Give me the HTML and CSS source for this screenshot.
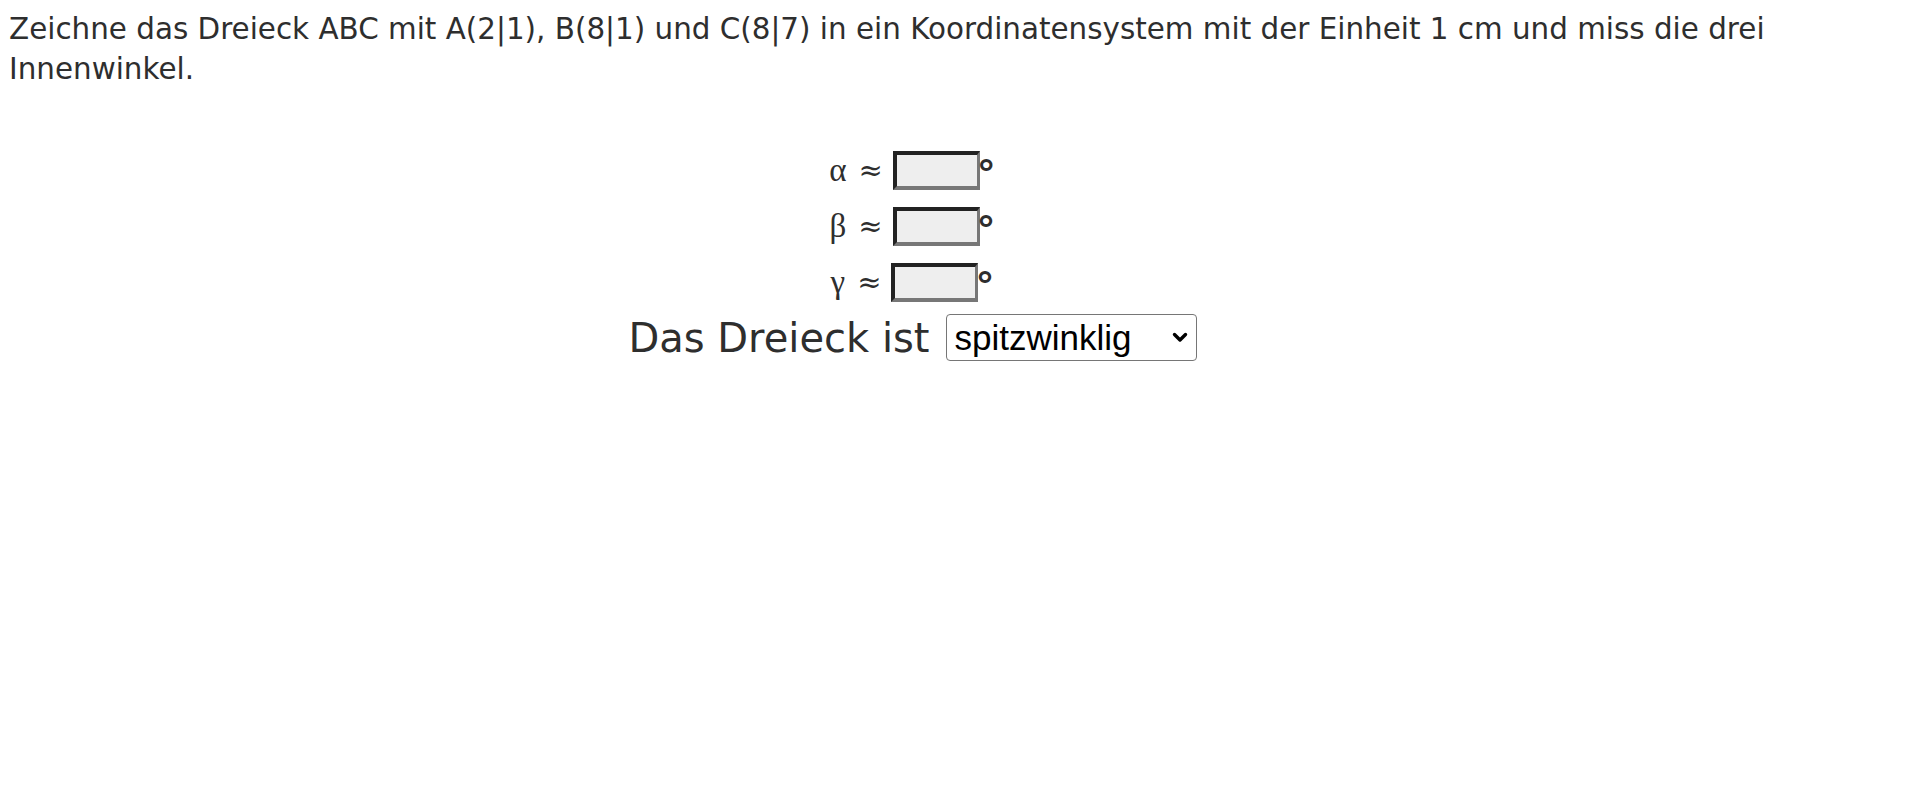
FILE: index.html
```html
<!DOCTYPE html>
<html lang="de">
<head>
<meta charset="utf-8">
<title>Dreieck</title>
<link rel="stylesheet" href="styles.css">
</head>
<body>
<p class="task">Zeichne das Dreieck ABC mit A(2|1), B(8|1) und C(8|7) in ein Koordinatensystem mit der Einheit 1 cm und miss die drei Innenwinkel.</p>
<div class="answers">
  <div class="row">
    <span class="sym">α</span><span class="approx">≈</span><input class="ans" type="text"><span class="deg">°</span>
  </div>
  <div class="row">
    <span class="sym">β</span><span class="approx">≈</span><input class="ans" type="text"><span class="deg">°</span>
  </div>
  <div class="row">
    <span class="sym">γ</span><span class="approx">≈</span><input class="ans" type="text"><span class="deg">°</span>
  </div>
  <div class="row row-select">
    <span class="label">Das Dreieck ist</span>
    <span class="select-wrap">
      <select class="kind">
        <option>spitzwinklig</option>
        <option>rechtwinklig</option>
        <option>stumpfwinklig</option>
      </select>
      <svg class="chev" width="16" height="11" viewBox="0 0 16 11"><path d="M2.5 2.5 L8 8 L13.5 2.5" fill="none" stroke="#000" stroke-width="3.4" stroke-linecap="round" stroke-linejoin="round"/></svg>
    </span>
  </div>
</div>
</body>
</html>
```

FILE: styles.css
```css
html, body {
  margin: 0;
  padding: 0;
  background: #ffffff;
}

body {
  margin: 8px;
  font-family: "DejaVu Sans", Verdana, sans-serif;
  color: #2e2e2e;
}

.task {
  margin: 0;
  padding: 1px 0 0 1px;
  font-size: 29.4px;
  line-height: 40px;
}

.answers {
  margin-top: 53px;
  padding-right: 95px;
  display: flex;
  flex-direction: column;
  align-items: center;
}

.row {
  height: 56px;
  display: flex;
  align-items: center;
  justify-content: center;
}

.sym {
  font-family: "Liberation Serif", "Times New Roman", serif;
  font-size: 33px;
  margin-right: 12px;
}

.approx {
  font-family: "DejaVu Serif", "Liberation Serif", serif;
  font-size: 29px;
  margin-right: 10px;
}

.ans {
  box-sizing: border-box;
  width: 87px;
  height: 39px;
  margin: 0;
  padding: 0 4px;
  background: #eeeeee;
  border-style: solid;
  border-width: 4px 3px 4px 4px;
  border-color: #222222 #777777 #777777 #222222;
  border-radius: 0;
  font-size: 20px;
  outline: none;
}

.deg {
  align-self: flex-start;
  margin-top: 13px;
  margin-left: -3px;
  font-family: "DejaVu Sans", sans-serif;
  font-weight: bold;
  font-size: 38px;
  line-height: 1;
  color: #2e2e2e;
}

.row-select {
  height: 55px;
}

.label {
  font-size: 40px;
  margin-right: 16px;
}

.select-wrap {
  position: relative;
  display: inline-block;
}

.kind {
  -webkit-appearance: none;
  appearance: none;
  box-sizing: border-box;
  width: 251px;
  height: 47px;
  margin: 0;
  padding: 0 0 0 8px;
  border: 1px solid #767676;
  border-radius: 4px;
  background: #ffffff;
  color: #000000;
  font-family: "Liberation Sans", Arial, sans-serif;
  font-size: 35px;
  display: block;
}

.chev {
  position: absolute;
  right: 9px;
  top: 18px;
  pointer-events: none;
}
```
